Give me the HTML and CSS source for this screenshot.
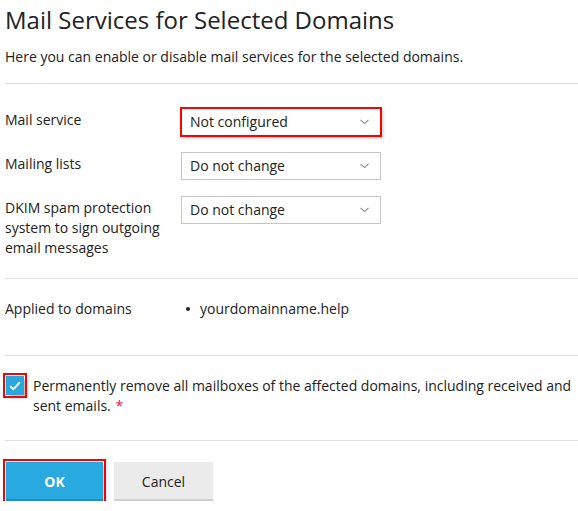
FILE: index.html
```html
<!DOCTYPE html>
<html>
<head>
<meta charset="utf-8">
<link rel="stylesheet" href="styles.css">
</head>
<body>
<div class="page">
  <h1 class="title">Mail Services for Selected Domains</h1>
  <p class="intro">Here you can enable or disable mail services for the selected domains.</p>
  <div class="section form">
    <div class="row">
      <div class="label">Mail service</div>
      <div class="field"><div class="select marked"><span>Not configured</span><svg class="chev" width="9" height="6" viewBox="0 0 9 6"><path d="M0.5 0.8 L4.5 4.6 L8.5 0.8" fill="none" stroke="#8a8a8a" stroke-width="1.1"/></svg></div></div>
    </div>
    <div class="row">
      <div class="label">Mailing lists</div>
      <div class="field"><div class="select"><span>Do not change</span><svg class="chev" width="9" height="6" viewBox="0 0 9 6"><path d="M0.5 0.8 L4.5 4.6 L8.5 0.8" fill="none" stroke="#8a8a8a" stroke-width="1.1"/></svg></div></div>
    </div>
    <div class="row">
      <div class="label">DKIM spam protection system to sign outgoing email messages</div>
      <div class="field"><div class="select"><span>Do not change</span><svg class="chev" width="9" height="6" viewBox="0 0 9 6"><path d="M0.5 0.8 L4.5 4.6 L8.5 0.8" fill="none" stroke="#8a8a8a" stroke-width="1.1"/></svg></div></div>
    </div>
  </div>
  <div class="section applied">
    <div class="label">Applied to domains</div>
    <div class="domains"><span class="dot"></span><span>yourdomainname.help</span></div>
  </div>
  <div class="section confirm">
    <span class="check"><svg width="12" height="10" viewBox="0 0 12 10"><path d="M1.2 5.2 L4.4 8.2 L10.8 1.4" fill="none" stroke="#fff" stroke-width="1.9"/></svg></span>
    <span class="confirm-text">Permanently remove all mailboxes of the affected domains, including received and sent emails. <span class="req">*</span></span>
  </div>
  <div class="buttons">
    <button class="btn btn-primary">OK</button>
    <button class="btn btn-default">Cancel</button>
  </div>
</div>
</body>
</html>
```
FILE: styles.css
```css
html, body {
  margin: 0;
  padding: 0;
  background: #fff;
}
body {
  font-family: "Open Sans", "Noto Sans", sans-serif;
  font-size: 14px;
  line-height: 20px;
  color: #222;
}
.page {
  padding-left: 5px;
}
.title {
  margin: 4px 0 0;
  font-size: 24px;
  line-height: 32px;
  font-weight: 400;
  color: #222;
}
.intro {
  margin: 11px 0 0;
  padding-bottom: 16px;
  border-bottom: 1px solid #dcdcdc;
}
.section {
  border-bottom: 1px solid #e2e2e2;
}
.form {
  padding: 24px 0 20px;
  display: flex;
  flex-direction: column;
  gap: 16px;
}
.row {
  display: flex;
}
.label {
  width: 176px;
  flex: none;
  padding-top: 2px;
  padding-right: 8px;
  box-sizing: border-box;
}
.select {
  width: 200px;
  height: 28px;
  box-sizing: border-box;
  border: 1px solid #c6c6c6;
  display: flex;
  align-items: center;
  justify-content: space-between;
  padding: 0 11px 0 8px;
  font-size: 14px;
}
.chev {
  display: block;
}
.marked {
  outline: 2px solid #f00;
  outline-offset: -1px;
  box-shadow: 2px 2px 3px rgba(0,0,0,0.25);
}
.applied {
  display: flex;
  padding: 20px 0 36px;
}
.applied .label {
  padding-top: 0;
}
.domains {
  display: flex;
  align-items: center;
  font-size: 14px;
  padding-left: 5px;
}
.dot {
  width: 4px;
  height: 4px;
  border-radius: 50%;
  background: #222;
  margin-right: 10px;
}
.confirm {
  display: flex;
  align-items: flex-start;
  padding: 20px 0 24px;
}
.check {
  flex: none;
  width: 18px;
  height: 19px;
  margin: 0 9px 0 1px;
  background: #29a8de;
  display: flex;
  align-items: center;
  justify-content: center;
  outline: 2px solid #f00;
  outline-offset: 1px;
  box-shadow: 3px 3px 3px rgba(0,0,0,0.25);
}
.confirm-text {
  font-size: 14px;
  color: #222;
}
.req {
  color: #d0244a;
  margin-left: 1px;
}
.buttons {
  display: flex;
  gap: 11px;
  padding-top: 21px;
}
.btn {
  font-family: "Open Sans", "Noto Sans", sans-serif;
  font-size: 14px;
  width: 99px;
  height: 39px;
  border: none;
  border-radius: 0;
  cursor: pointer;
  padding: 0;
}
.btn-primary {
  margin-left: 1px;
  width: 97px;
  background: #28a9df;
  color: #fff;
  font-weight: 700;
  box-shadow: inset 0 -2px 0 #1d8fc0, 3px 3px 3px rgba(0,0,0,0.2);
  outline: 2px solid #f00;
  outline-offset: 1px;
}
.btn-default {
  background: #ebebeb;
  color: #222;
  box-shadow: inset 0 -2px 0 #cfcfcf;
}
```
